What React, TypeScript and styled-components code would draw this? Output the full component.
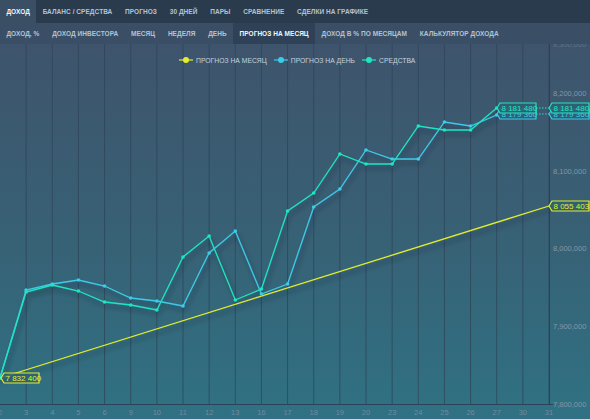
import React from 'react';
import styled, { createGlobalStyle } from 'styled-components';

const GlobalStyle = createGlobalStyle`
  html, body {
    margin: 0;
    padding: 0;
    background: #2c3c4f;
  }
  body {
    font-family: "Liberation Sans", Arial, sans-serif;
  }
`;

const Page = styled.div`
  width: 590px;
  height: 419px;
  overflow: hidden;
  display: flex;
  flex-direction: column;
`;

const NavBar = styled.div<{ $level: 1 | 2 }>`
  display: flex;
  height: ${p => (p.$level === 1 ? 23 : 21)}px;
  background: ${p => (p.$level === 1 ? '#2b3b4e' : '#3a4f66')};
  flex-shrink: 0;
`;

const Tab = styled.div<{ $active?: boolean; $level: 1 | 2 }>`
  display: flex;
  align-items: center;
  padding: 0 6.4px;
  font-size: 6.5px;
  font-weight: 700;
  letter-spacing: 0.05px;
  text-transform: uppercase;
  white-space: nowrap;
  color: ${p => (p.$active ? '#f2f6fa' : '#b4c2d0')};
  background: ${p =>
    p.$active ? (p.$level === 1 ? '#3a4e64' : '#2e4156') : 'transparent'};
`;

const ChartArea = styled.div`
  position: relative;
  flex: 1;
  background: linear-gradient(180deg, #3e546c 0%, #376276 55%, #2f7283 100%);
`;

const Legend = styled.div`
  position: absolute;
  top: 12px;
  left: 179px;
  display: flex;
  gap: 7px;
  align-items: center;
`;

const LegendItem = styled.div`
  display: flex;
  align-items: center;
  gap: 3px;
  font-size: 6.8px;
  color: #c6d3df;
  white-space: nowrap;
`;

const topTabs = ['Доход', 'Баланс / Средства', 'Прогноз', '30 дней', 'Пары', 'Сравнение', 'Сделки на графике'];
const subTabs = ['Доход, %', 'Доход инвестора', 'Месяц', 'Неделя', 'День', 'Прогноз на месяц', 'Доход в % по месяцам', 'Калькулятор дохода'];

const xLabels = [2, 3, 4, 5, 6, 9, 10, 11, 12, 13, 16, 17, 18, 19, 20, 23, 24, 25, 26, 27, 30, 31];
const step = 549 / 21;
const xAt = (i: number) => i * step;

const funds = [378, 292, 285, 291, 302, 305, 310, 257, 236, 300, 289, 211, 193, 154, 164, 164, 126, 130, 130, 108];
const dayForecast = [378, 290, 284, 280, 286, 298, 301, 306, 253, 231, 294, 284, 207, 189, 150, 159, 159, 122, 126, 115];

const YELLOW = '#e4ee2c';
const BLUE = '#3ccbe8';
const GREEN = '#1ee6c0';

const yTicks = [
  { y: 404, t: '7,800,000' },
  { y: 326, t: '7,900,000' },
  { y: 248, t: '8,000,000' },
  { y: 171, t: '8,100,000' },
  { y: 93, t: '8,200,000' },
];

const points = (ys: number[]) => ys.map((y, i) => `${xAt(i).toFixed(1)},${y}`).join(' ');

const Marker: React.FC<{ color: string }> = ({ color }) => (
  <svg width="14" height="8" viewBox="0 0 14 8">
    <line x1="0" y1="4" x2="14" y2="4" stroke={color} strokeWidth="1.2" />
    <circle cx="7" cy="4" r="3" fill={color} />
  </svg>
);

const Tag: React.FC<{ x: number; y: number; w: number; color: string; text: string }> = ({ x, y, w, color, text }) => (
  <g>
    <path
      d={`M${x} ${y} l3 -5 h${w} v10 h${-w} z`}
      fill="#2f6073"
      fillOpacity="0.85"
      stroke={color}
      strokeWidth="1.2"
    />
    <text x={x + 4.5} y={y + 3} fontSize="8" fill={color} fontFamily="Liberation Sans, Arial, sans-serif">
      {text}
    </text>
  </g>
);

const Chart: React.FC = () => (
  <svg width="590" height="375" viewBox="0 44 590 375" style={{ display: 'block' }}>
    <defs>
      <filter id="shadow" x="-5%" y="-5%" width="110%" height="120%">
        <feDropShadow dx="2" dy="4" stdDeviation="2.5" floodColor="#13222f" floodOpacity="0.45" />
      </filter>
    </defs>
    {xLabels.map((_, i) =>
      i === 0 ? null : (
        <line key={i} x1={xAt(i)} y1="44" x2={xAt(i)} y2="404" stroke="#2f4458" strokeOpacity="0.75" strokeWidth="1" />
      )
    )}
    <line x1="0" y1="404.5" x2="553" y2="404.5" stroke="#2c4258" strokeWidth="1" />
    <line x1="549.5" y1="44" x2="549.5" y2="404" stroke="#2c4258" strokeWidth="1" />
    <text x="553" y="47" fontSize="7.5" fill="#7e92a6" fillOpacity="0.5" fontFamily="Liberation Sans, Arial, sans-serif">
      8,300,000
    </text>
    {yTicks.map(t => (
      <text key={t.t} x="553" y={t.y + 3} fontSize="7.5" fill="#8296a9" fontFamily="Liberation Sans, Arial, sans-serif">
        {t.t}
      </text>
    ))}
    {xLabels.map((l, i) => (
      <text
        key={l}
        x={xAt(i)}
        y="415"
        fontSize="7.5"
        textAnchor="middle"
        fill="#6f8aa0"
        fontFamily="Liberation Sans, Arial, sans-serif"
      >
        {l}
      </text>
    ))}
    <g filter="url(#shadow)">
      <line x1="0" y1="378" x2="549" y2="206" stroke={YELLOW} strokeWidth="1.3" />
      <polyline points={points(dayForecast)} fill="none" stroke={BLUE} strokeWidth="1.3" />
      <polyline points={points(funds)} fill="none" stroke={GREEN} strokeWidth="1.3" />
    </g>
    {dayForecast.map((y, i) => (
      <circle key={`b${i}`} cx={xAt(i)} cy={y} r="1.8" fill={BLUE} />
    ))}
    {funds.map((y, i) => (
      <circle key={`g${i}`} cx={xAt(i)} cy={y} r="1.8" fill={GREEN} />
    ))}
    <line x1="533" y1="114" x2="552" y2="114" stroke={BLUE} strokeWidth="1" strokeDasharray="1.5 1.5" />
    <line x1="533" y1="108" x2="552" y2="108" stroke={GREEN} strokeWidth="1" strokeDasharray="1.5 1.5" />
    <Tag x={497} y={114} w={36} color={BLUE} text="8 179 360" />
    <Tag x={549} y={114} w={37} color={BLUE} text="8 179 360" />
    <Tag x={497} y={108} w={36} color={GREEN} text="8 181 480" />
    <Tag x={549} y={108} w={37} color={GREEN} text="8 181 480" />
    <Tag x={549} y={206} w={37} color={YELLOW} text="8 055 403" />
    <Tag x={1} y={378} w={35} color={YELLOW} text="7 832 400" />
  </svg>
);

const App: React.FC = () => (
  <Page>
    <GlobalStyle />
    <NavBar $level={1}>
      {topTabs.map((t, i) => (
        <Tab key={t} $level={1} $active={i === 0}>
          {t}
        </Tab>
      ))}
    </NavBar>
    <NavBar $level={2}>
      {subTabs.map((t, i) => (
        <Tab key={t} $level={2} $active={i === 5}>
          {t}
        </Tab>
      ))}
    </NavBar>
    <ChartArea>
      <Chart />
      <Legend>
        <LegendItem>
          <Marker color={YELLOW} />
          ПРОГНОЗ НА МЕСЯЦ
        </LegendItem>
        <LegendItem>
          <Marker color={BLUE} />
          ПРОГНОЗ НА ДЕНЬ
        </LegendItem>
        <LegendItem>
          <Marker color={GREEN} />
          СРЕДСТВА
        </LegendItem>
      </Legend>
    </ChartArea>
  </Page>
);

export default App;
